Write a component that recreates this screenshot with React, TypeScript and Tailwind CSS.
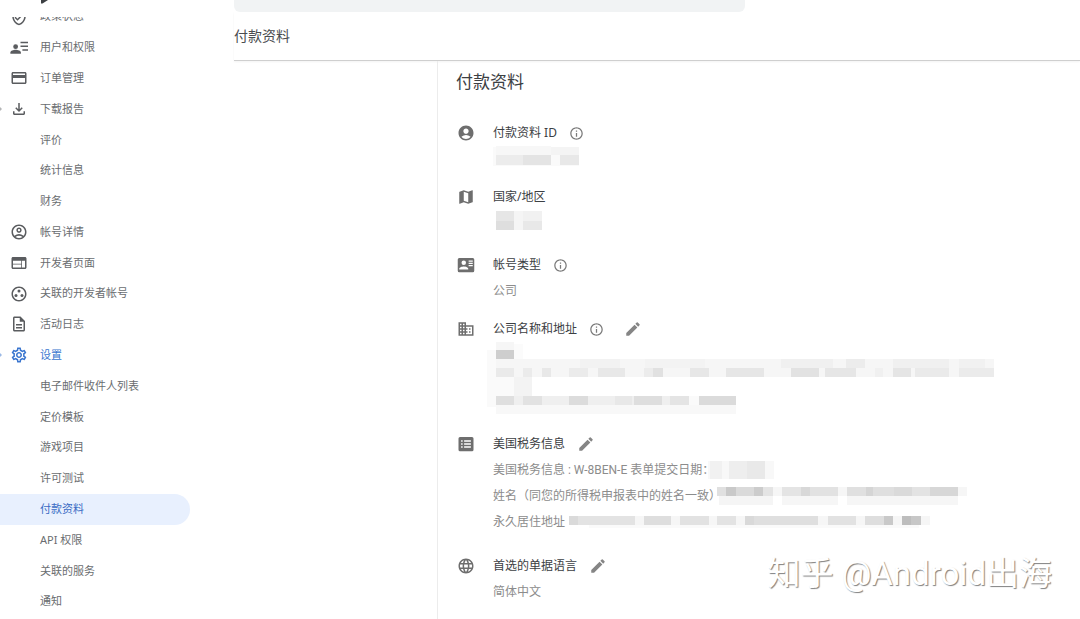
import type { ReactNode } from 'react';
import type { IconType } from 'react-icons';
import {
  MdAccountCircle,
  MdBusiness,
  MdCreditCard,
  MdLanguage,
  MdMap,
  MdModeEdit,
  MdOutlineAccountCircle,
  MdOutlineDescription,
  MdOutlineFileDownload,
  MdOutlineGroupWork,
  MdOutlineInfo,
  MdOutlineSettings,
  MdOutlineVerifiedUser,
  MdWeb,
} from 'react-icons/md';
import clsx from 'clsx';

type IconProps = { size?: number; className?: string };

function UsersIcon({ size = 18, className }: IconProps) {
  return (
    <svg viewBox="0 0 24 24" width={size} height={size} fill="currentColor" className={className}>
      <circle cx="7.5" cy="11.5" r="3.2" />
      <path d="M0.500 21v-1.600c0-2.400 4.200-3.700 7-3.700s7 1.300 7 3.700V21z" />
      <path d="M14 5h10v2H14zM14 10h10v2H14zM16.500 15H24v2h-7.500z" />
    </svg>
  );
}

function ContactCardIcon({ size = 18, className }: IconProps) {
  return (
    <svg viewBox="0 0 24 24" width={size} height={size} fill="currentColor" className={className}>
      <path
        fillRule="evenodd"
        d="M3 2.500h18a2 2 0 0 1 2 2v15a2 2 0 0 1-2 2H3a2 2 0 0 1-2-2v-15a2 2 0 0 1 2-2zM9 6a3 3 0 1 0 0 6 3 3 0 0 0 0-6zM3 18h12v-1c0-2-4-3.100-6-3.100S3 15 3 17zM15.500 6v1.500H21V6zM15.500 9v1.500H21V9zM15.500 12v1.500H21V12z"
      />
    </svg>
  );
}

function FormIcon({ size = 18, className }: IconProps) {
  return (
    <svg viewBox="0 0 24 24" width={size} height={size} fill="currentColor" className={className}>
      <path
        fillRule="evenodd"
        d="M4 2.500h16a2 2 0 0 1 2 2v15a2 2 0 0 1-2 2H4a2 2 0 0 1-2-2v-15a2 2 0 0 1 2-2zM5.500 7v2h2V7zM9.500 7v2h9V7zM5.500 11v2h2v-2zM9.500 11v2h9v-2zM5.500 15v2h2v-2zM9.500 15v2h9v-2z"
      />
    </svg>
  );
}

type NavItem = {
  label: string;
  icon?: IconType | typeof UsersIcon;
  expanded?: boolean;
  tone?: 'active' | 'selected';
};

const navItems: NavItem[] = [
  { label: '用户和权限', icon: UsersIcon },
  { label: '订单管理', icon: MdCreditCard },
  { label: '下载报告', icon: MdOutlineFileDownload, expanded: true },
  { label: '评价' },
  { label: '统计信息' },
  { label: '财务' },
  { label: '帐号详情', icon: MdOutlineAccountCircle },
  { label: '开发者页面', icon: MdWeb },
  { label: '关联的开发者帐号', icon: MdOutlineGroupWork },
  { label: '活动日志', icon: MdOutlineDescription },
  { label: '设置', icon: MdOutlineSettings, expanded: true, tone: 'active' },
  { label: '电子邮件收件人列表' },
  { label: '定价模板' },
  { label: '游戏项目' },
  { label: '许可测试' },
  { label: '付款资料', tone: 'selected' },
  { label: 'API 权限' },
  { label: '关联的服务' },
  { label: '通知' },
];

function NavRow({ label, icon: Icon, expanded, tone }: NavItem) {
  return (
    <a
      href="#"
      className={clsx(
        'relative flex h-full w-full items-center rounded-r-full text-[11px]',
        !tone && 'text-[#6a6d70]',
        tone === 'active' && 'text-[#3a76cf]',
        tone === 'selected' && 'bg-[#e8f0fe] text-[#3a6cc4]',
      )}
    >
      {expanded && (
        <svg viewBox="0 0 2 4" className="absolute left-0 h-1 w-0.5 opacity-50" fill="currentColor">
          <path d="M0 0l2 2-2 2z" />
        </svg>
      )}
      <span className={clsx('w-10 shrink-0 pl-2.5', !tone && 'text-[#5a5c5f]')}>
        {Icon && <Icon size={18} />}
      </span>
      {label}
    </a>
  );
}

// [x, y, width, height, fill]
type Tile = [number, number, number, number, string];

function Mosaic({ width, height, tiles, className }: { width: number; height: number; tiles: Tile[]; className?: string }) {
  return (
    <svg width={width} height={height} className={clsx('shrink-0', className)} shapeRendering="crispEdges" aria-hidden="true">
      {tiles.map(([x, y, w, h, fill], i) => (
        <rect key={i} x={x} y={y} width={w} height={h} fill={fill} />
      ))}
    </svg>
  );
}

const idTiles: Tile[] = [
  [0, 1, 86, 19, '#fafafa'],
  [3, 0, 55, 9, '#f7f7f7'],
  [58, 1, 28, 8, '#f4f4f4'],
  [3, 9, 27, 10, '#ececec'],
  [30, 9, 28, 10, '#e4e4e4'],
  [67, 9, 19, 10, '#e8e8e8'],
];

const countryTiles: Tile[] = [
  [3, 1, 18, 10, '#e6e6e6'],
  [3, 11, 18, 9, '#dedede'],
  [21, 1, 9, 19, '#f5f5f5'],
  [30, 1, 19, 10, '#f1f1f1'],
  [30, 11, 19, 9, '#e8e8e8'],
];

const addressTiles: Tile[] = [
  [2, 8, 9, 57, '#fafafa'],
  [11, 0, 18, 8, '#f6f6f6'],
  [29, 2, 9, 15, '#fbfbfb'],
  [11, 8, 18, 9, '#cecece'],
  [11, 17, 498, 18, '#f6f6f6'],
  [95, 17, 40, 9, '#f2f2f2'],
  [160, 17, 60, 9, '#f3f3f3'],
  [296, 17, 52, 9, '#f0f0f0'],
  [361, 17, 19, 9, '#ececec'],
  [408, 17, 56, 9, '#f0f0f0'],
  [474, 17, 26, 9, '#f1f1f1'],
  [11, 26, 18, 9, '#eaeaea'],
  [38, 26, 9, 9, '#ebebeb'],
  [57, 26, 9, 9, '#e8e8e8'],
  [84, 26, 19, 9, '#ebebeb'],
  [113, 26, 27, 9, '#e8e8e8'],
  [159, 26, 9, 9, '#ececec'],
  [168, 26, 10, 9, '#e1e1e1'],
  [205, 26, 19, 9, '#e7e7e7'],
  [241, 26, 38, 9, '#e6e6e6'],
  [306, 26, 28, 9, '#e2e2e2'],
  [340, 26, 31, 9, '#e6e6e6'],
  [390, 26, 8, 9, '#f0f0f0'],
  [408, 26, 18, 9, '#e5e5e5'],
  [430, 26, 34, 9, '#eaeaea'],
  [474, 26, 35, 9, '#ebebeb'],
  [11, 35, 18, 19, '#fafafa'],
  [29, 35, 18, 19, '#f3f3f3'],
  [11, 54, 240, 9, '#efefef'],
  [11, 54, 18, 9, '#dfdfdf'],
  [38, 54, 19, 9, '#e2e2e2'],
  [84, 54, 19, 9, '#dcdcdc'],
  [130, 54, 17, 9, '#e8e8e8'],
  [149, 54, 28, 9, '#dedede'],
  [185, 54, 19, 9, '#e4e4e4'],
  [204, 54, 10, 9, '#fafafa'],
  [214, 54, 37, 9, '#dbdbdb'],
  [11, 63, 240, 9, '#f8f8f8'],
];

const taxDateTiles: Tile[] = [
  [0, 0, 66, 18, '#f8f8f8'],
  [2, 0, 12, 18, '#f1f1f1'],
  [21, 0, 18, 18, '#eeeeee'],
  [39, 0, 18, 18, '#e9e9e9'],
];

const taxNameTiles: Tile[] = [
  [0, 0, 250, 9, '#f6f6f6'],
  [0, 0, 9, 9, '#e0e0e0'],
  [9, 0, 10, 9, '#c9c9c9'],
  [19, 0, 18, 9, '#dadada'],
  [37, 0, 9, 9, '#cccccc'],
  [46, 0, 10, 9, '#e4e4e4'],
  [65, 0, 19, 9, '#e4e4e4'],
  [84, 0, 9, 9, '#d8d8d8'],
  [93, 0, 28, 9, '#e2e2e2'],
  [130, 0, 19, 9, '#e0e0e0'],
  [149, 0, 7, 9, '#d5d5d5'],
  [156, 0, 21, 9, '#dfdfdf'],
  [177, 0, 18, 9, '#dadada'],
  [195, 0, 18, 9, '#e3e3e3'],
  [213, 0, 28, 9, '#d7d7d7'],
  [2, 9, 54, 9, '#f5f5f5'],
  [65, 9, 56, 9, '#f6f6f6'],
  [130, 9, 111, 9, '#f6f6f6'],
];

const taxAddressTiles: Tile[] = [
  [0, 0, 361, 9, '#f6f6f6'],
  [0, 0, 9, 9, '#dadada'],
  [9, 0, 57, 9, '#e3e3e3'],
  [75, 0, 27, 9, '#dedede'],
  [111, 0, 29, 9, '#e2e2e2'],
  [148, 0, 19, 9, '#e3e3e3'],
  [176, 0, 9, 9, '#d9d9d9'],
  [185, 0, 64, 9, '#dfdfdf'],
  [259, 0, 28, 9, '#e2e2e2'],
  [296, 0, 19, 9, '#dedede'],
  [315, 0, 9, 9, '#c9c9c9'],
  [333, 0, 9, 9, '#bdbdbd'],
  [342, 0, 10, 9, '#c7c7c7'],
  [20, 9, 330, 3, '#fafafa'],
];

type FieldProps = {
  icon: IconType | typeof UsersIcon;
  label: string;
  info?: boolean;
  editable?: boolean;
  children: ReactNode;
};

function Field({ icon: Icon, label, info, editable, children }: FieldProps) {
  return (
    <section className="flex">
      <div className="flex h-[26px] w-9 shrink-0 items-center text-[#6e6e6e]">
        <Icon size={18} />
      </div>
      <div className="min-w-0">
        <div className="flex h-[26px] items-center">
          <h3 className="text-[12px] text-[#3c4043]">{label}</h3>
          {info && (
            <button type="button" aria-label={`${label}说明`} className="ml-3 text-[#7a7a7a]">
              <MdOutlineInfo size={15} />
            </button>
          )}
          {editable && (
            <button type="button" aria-label={`修改${label}`} className={clsx('text-[#858585]', info ? 'ml-5' : 'ml-3')}>
              <MdModeEdit size={18} />
            </button>
          )}
        </div>
        {children}
      </div>
    </section>
  );
}

function Line({ children }: { children: ReactNode }) {
  return (
    <div className="flex h-[26px] items-center whitespace-nowrap font-['Roboto','Noto_Sans_CJK_SC',sans-serif] text-[12px] text-[#8c8c8c]">
      {children}
    </div>
  );
}

export default function App() {
  return (
    <div className="relative flex min-h-screen bg-white font-['Noto_Sans','Noto_Sans_CJK_SC',sans-serif]">
      <nav className="flex w-[190px] shrink-0 flex-col pb-0.5">
        <div className="h-[17px] pl-[41px]">
          <svg width="8" height="4" viewBox="0 0 8 4" fill="#3c4043" aria-hidden="true">
            <path d="M0 0h7L1.500 3.500H0z" />
          </svg>
        </div>
        {/* Row scrolled halfway under the header */}
        <div className="flex h-[15px] items-end overflow-hidden">
          <div className="h-[31px] w-full shrink-0">
            <NavRow label="政策状态" icon={MdOutlineVerifiedUser} />
          </div>
        </div>
        <ul className="grid flex-1 auto-rows-fr">
          {navItems.map((item) => (
            <li key={item.label}>
              <NavRow {...item} />
            </li>
          ))}
        </ul>
      </nav>

      <div className="flex min-w-0 flex-1 flex-col pl-11">
        <input type="search" aria-label="搜索" className="h-3 w-[511px] rounded-b-md bg-[#f1f3f4] outline-none" />
        <header className="flex h-[49px] items-center border-b border-[#cfcfcf] pb-0.5 shadow-xs">
          <h1 className="text-[14px] text-[#4a4c4f]">付款资料</h1>
        </header>

        <div className="flex flex-1 pl-[203px]">
          <main className="min-w-0 flex-1 border-l border-[#ececec] pl-[18px]">
            <h2 className="flex h-[59px] items-start pt-2 text-[17px] text-[#3c4043]">付款资料</h2>
            <div className="flex flex-col gap-3 pl-px">
              <Field icon={MdAccountCircle} label="付款资料 ID" info>
                <Mosaic width={90} height={26} tiles={idTiles} className="block" />
              </Field>
              <Field icon={MdMap} label="国家/地区">
                <Mosaic width={60} height={30} tiles={countryTiles} className="block" />
              </Field>
              <Field icon={ContactCardIcon} label="帐号类型" info>
                <Line>公司</Line>
              </Field>
              <Field icon={MdBusiness} label="公司名称和地址" info editable>
                <Mosaic width={512} height={77} tiles={addressTiles} className="-ml-2 block" />
              </Field>
              <Field icon={FormIcon} label="美国税务信息" editable>
                <div className="pb-1.5">
                  <Line>
                    美国税务信息 : W-8BEN-E 表单提交日期：
                    <Mosaic width={66} height={18} tiles={taxDateTiles} className="-ml-1.5" />
                  </Line>
                  <Line>
                    姓名（同您的所得税申报表中的姓名一致）
                    <Mosaic width={250} height={18} tiles={taxNameTiles} className="-ml-1" />
                  </Line>
                  <Line>
                    永久居住地址
                    <Mosaic width={361} height={12} tiles={taxAddressTiles} className="ml-1" />
                  </Line>
                </div>
              </Field>
              <Field icon={MdLanguage} label="首选的单据语言" editable>
                <Line>简体中文</Line>
              </Field>
            </div>
          </main>
        </div>
      </div>

      <p className="pointer-events-none absolute right-7 bottom-6 font-['Roboto','Noto_Sans_CJK_SC',sans-serif] text-[33px] leading-[42px] text-white [text-shadow:1px_1px_1px_#808080]">
        知乎 @Android出海
      </p>
    </div>
  );
}
